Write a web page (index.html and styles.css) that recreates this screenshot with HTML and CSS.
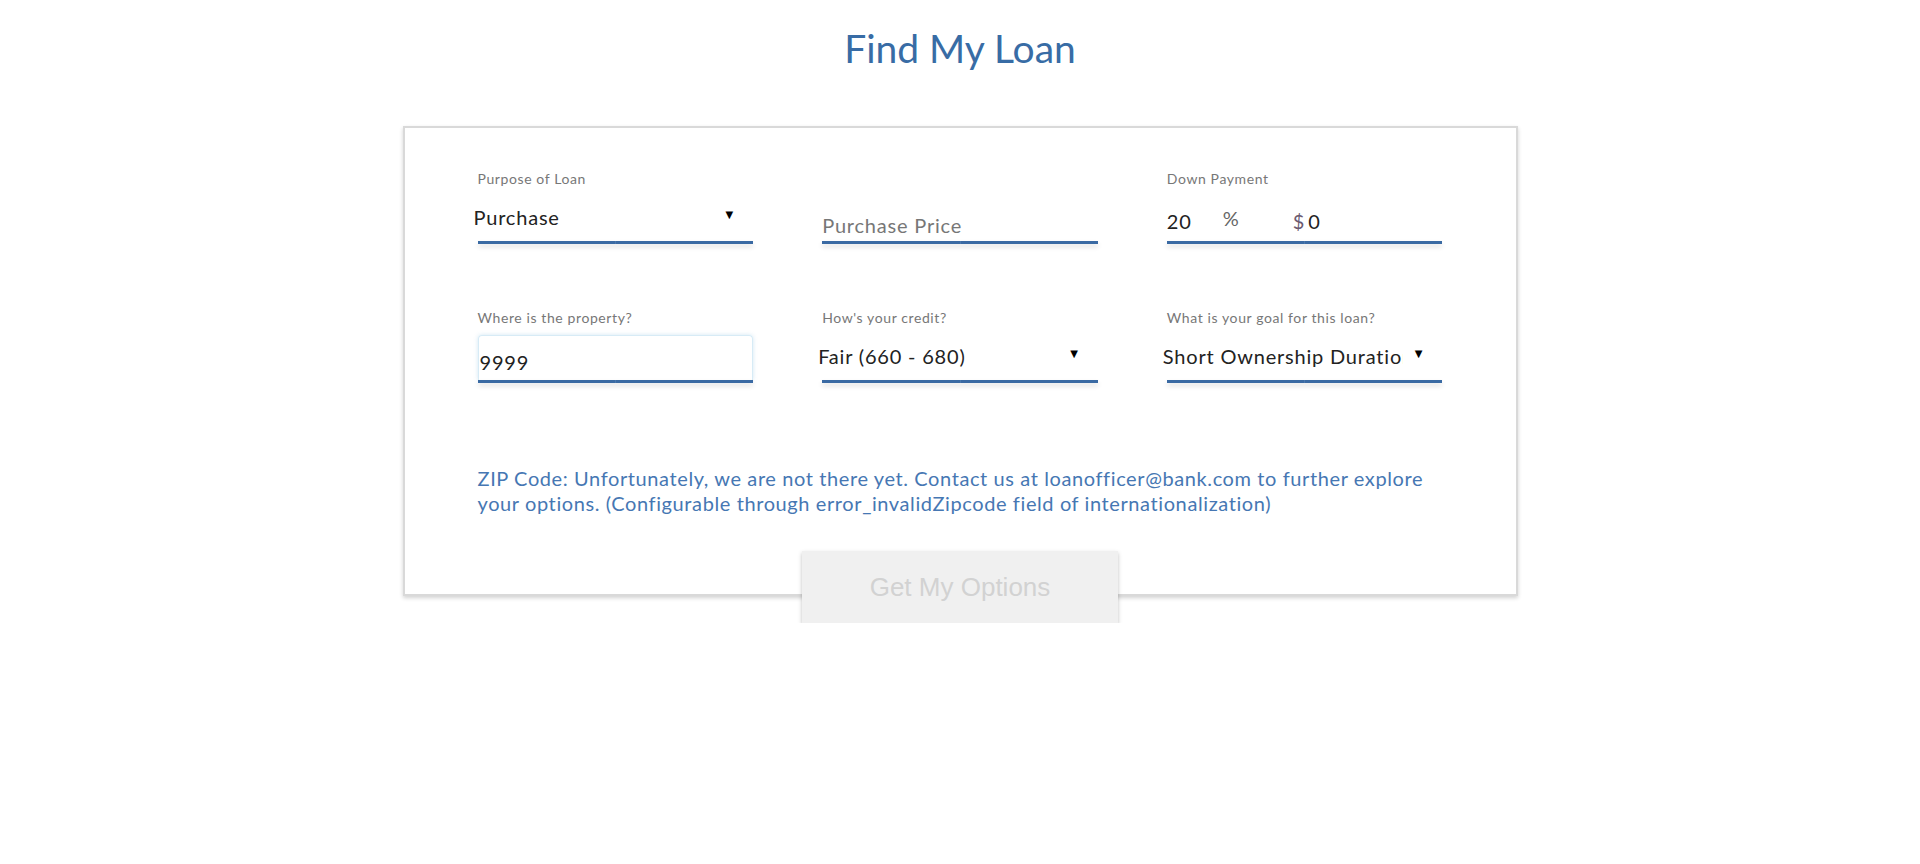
FILE: index.html
```html
<!DOCTYPE html>
<html lang="en">
<head>
<meta charset="utf-8">
<title>Find My Loan</title>
<link rel="stylesheet" href="styles.css">
</head>
<body>
<div class="page">
  <h1 class="title">Find My Loan</h1>
  <div class="card">
    <div class="grid">
      <div class="field">
        <div class="label">Purpose of Loan</div>
        <div class="control select">
          <span class="value">Purchase</span>
          <span class="arrow">&#9660;</span>
        </div>
        <div class="bar"></div>
      </div>
      <div class="field">
        <div class="label"></div>
        <div class="control low">
          <span class="placeholder">Purchase Price</span>
        </div>
        <div class="bar"></div>
      </div>
      <div class="field">
        <div class="label">Down Payment</div>
        <div class="control mid">
          <span class="dp-num">20</span>
          <span class="dp-pct">%</span>
          <span class="dp-cur">$</span>
          <span class="dp-amt">0</span>
        </div>
        <div class="bar"></div>
      </div>

      <div class="field">
        <div class="label">Where is the property?</div>
        <div class="control input-box">
          <span class="input-val">9999</span>
        </div>
        <div class="bar"></div>
      </div>
      <div class="field">
        <div class="label">How's your credit?</div>
        <div class="control select">
          <span class="value">Fair (660 - 680)</span>
          <span class="arrow">&#9660;</span>
        </div>
        <div class="bar"></div>
      </div>
      <div class="field">
        <div class="label">What is your goal for this loan?</div>
        <div class="control select">
          <span class="value">Short Ownership Duration</span>
          <span class="arrow">&#9660;</span>
        </div>
        <div class="bar"></div>
      </div>
    </div>
    <p class="error">ZIP Code: Unfortunately, we are not there yet. Contact us at loanofficer@bank.com to further explore your options. (Configurable through error_invalidZipcode field of internationalization)</p>
  </div>
  <div class="actions">
    <button class="btn" disabled>Get My Options</button>
  </div>
</div>
</body>
</html>
```

FILE: styles.css
```css
html, body {
  margin: 0;
  padding: 0;
  background: #ffffff;
}

body {
  font-family: Lato, "Noto Sans", sans-serif;
}

.page {
  padding-top: 24px;
}

.title {
  margin: 0;
  text-align: center;
  font-size: 39px;
  line-height: 48px;
  font-weight: 400;
  color: #386ca5;
}

.card {
  box-sizing: border-box;
  width: 1115px;
  margin: 54px auto 0;
  border: 2px solid #d9d9d9;
  box-shadow: 0 2px 4px rgba(0, 0, 0, 0.18);
  padding: 41px 73px 78px;
  background: #ffffff;
}

.grid {
  display: grid;
  grid-template-columns: repeat(3, minmax(0, 1fr));
  column-gap: 69px;
  row-gap: 64px;
}

.field {
  display: flex;
  flex-direction: column;
  min-width: 0;
}

.label {
  height: 20px;
  font-size: 14px;
  line-height: 20px;
  letter-spacing: 0.6px;
  color: #777777;
}

.control {
  height: 52px;
  box-sizing: border-box;
  display: flex;
  align-items: center;
  padding-top: 3px;
  font-size: 20px;
  letter-spacing: 0.8px;
  color: #222222;
  white-space: nowrap;
}

.bar {
  height: 3px;
  background: linear-gradient(to right, #3a6aa3 0 50%, #4a78ad 50% calc(50% + 1px), #3a6aa3 calc(50% + 1px));
  box-shadow: 0 3px 5px rgba(0, 0, 0, 0.14);
}

.select {
  padding-right: 20px;
}

.select .value {
  flex: 1;
  min-width: 0;
  overflow: hidden;
  margin-left: -4px;
  margin-right: 12px;
}

.arrow {
  font-family: "DejaVu Sans", sans-serif;
  font-size: 10px;
  letter-spacing: 0;
  color: #000000;
  margin-bottom: 4px;
}

.low {
  align-items: flex-end;
  padding-bottom: 4px;
}

.placeholder {
  color: #777777;
}

.mid {
  align-items: flex-end;
  padding-bottom: 8px;
}

.dp-num {
  width: 56px;
}

.dp-pct {
  width: 70px;
  color: #666666;
  margin-bottom: 3px;
}

.dp-cur {
  color: #6a5a70;
  margin-right: 3px;
}

.input-box {
  margin-top: 7px;
  height: 45px;
  padding-top: 0;
  align-items: flex-end;
  padding-bottom: 6px;
  border: 1px solid #d7ebf6;
  border-bottom: none;
  border-radius: 4px 4px 0 0;
  box-shadow: 0 0 4px rgba(120, 180, 220, 0.35);
}

.input-val {
  margin-left: 1px;
}

.error {
  margin: 83px 0 0;
  font-size: 20px;
  line-height: 25px;
  letter-spacing: 0.6px;
  color: #4677b3;
}

.actions {
  display: flex;
  justify-content: center;
  margin-top: -45px;
}

.btn {
  width: 316px;
  height: 72px;
  border: none;
  background: #f0f0f0;
  color: #d2d2d2;
  font-family: "Liberation Sans", Arial, sans-serif;
  font-size: 26px;
  box-shadow: 0 2px 4px rgba(0, 0, 0, 0.25);
  padding: 0;
}
```
